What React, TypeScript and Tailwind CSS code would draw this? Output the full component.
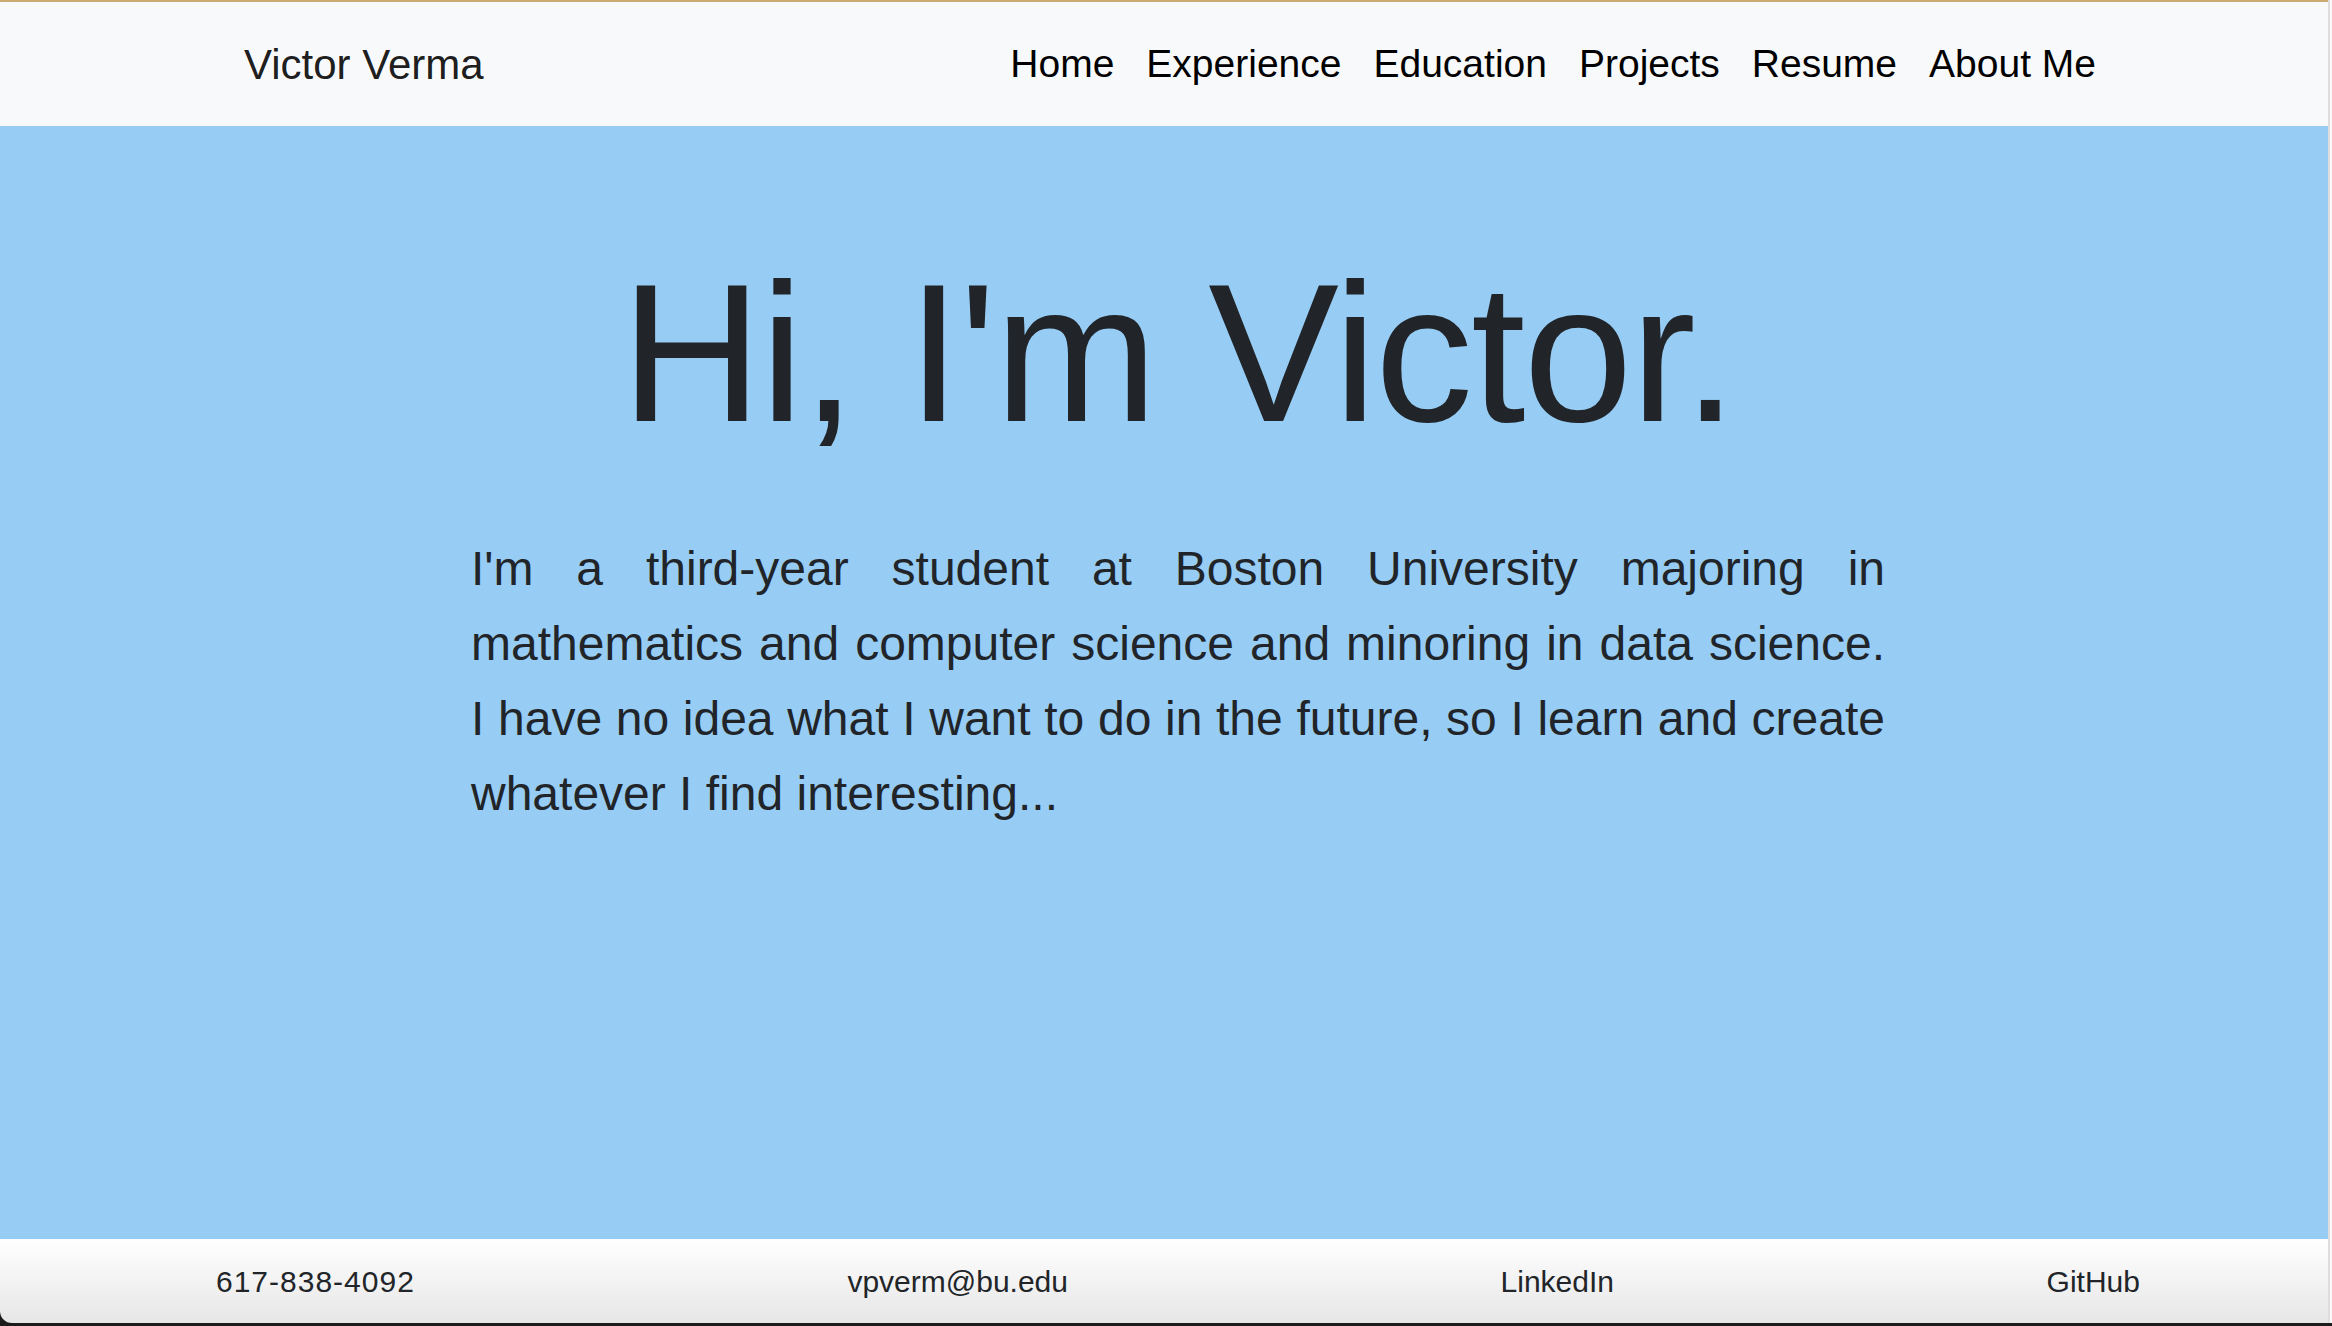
const navLinks = ["Home", "Experience", "Education", "Projects", "Resume", "About Me"];
const contacts = ["617-838-4092", "vpverm@bu.edu", "LinkedIn", "GitHub"];

export default function App() {
  return (
    <div
      className="flex h-screen flex-col bg-[#1b1b1b] pb-[3px]"
      style={{ fontFamily: '"Liberation Sans", Arial, sans-serif' }}
    >
      <div className="flex flex-1 overflow-hidden rounded-bl-[12px]">
        <div className="flex flex-1 flex-col">
          {/* Navbar */}
          <nav className="flex h-[126px] items-center justify-between border-t-2 border-[#c9ab72] bg-[#f8f9fa] pl-[244px] pr-[232px]">
            <a className="text-[42px] text-black/90">Victor Verma</a>
            <ul className="flex items-center gap-[32px]">
              {navLinks.map((link) => (
                <li key={link} className="text-[39px] text-black">
                  {link}
                </li>
              ))}
            </ul>
          </nav>

          {/* Hero */}
          <main className="flex flex-1 flex-col items-center bg-[#97cdf5] pl-[28px] pt-[110px] text-[#212529]">
            <h1 className="text-[196px] leading-[1.2] tracking-[-2px]">Hi, I'm Victor.</h1>
            <p className="mt-[60px] w-[1414px] text-justify text-[48px] leading-[75px]">
              I'm a third-year student at Boston University majoring in mathematics and computer science and
              minoring in data science. I have no idea what I want to do in the future, so I learn and create
              whatever I find interesting...
            </p>
          </main>

          {/* Footer */}
          <footer className="flex h-[84px] items-center justify-between bg-gradient-to-b from-white to-[#e6e6e6] pl-[216px] pr-[188px]">
            {contacts.map((c, i) => (
              <span key={c} className={`text-[30px] text-[#212529] ${i === 0 ? "tracking-[1px]" : ""}`}>
                {c}
              </span>
            ))}
          </footer>
        </div>
        <div className="w-[4px] border-l-2 border-[#dedede] bg-[#fbf9f9]" />
      </div>
    </div>
  );
}
